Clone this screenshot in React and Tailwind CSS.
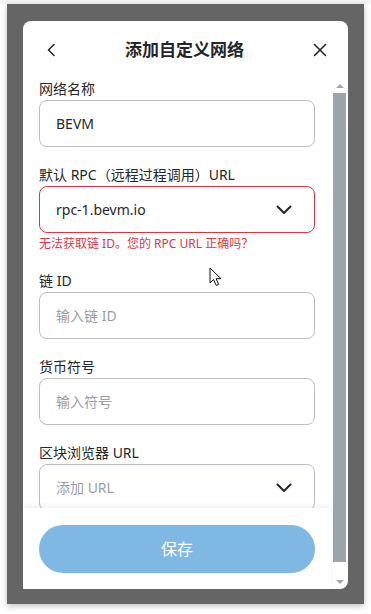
import { useState } from 'react';

const font = { fontFamily: '"Noto Sans", "Noto Sans CJK SC", sans-serif' };

function Chevron() {
  return (
    <svg width="16" height="10" viewBox="0 0 16 10" fill="none" stroke="#24272a" strokeWidth="2" strokeLinecap="round" strokeLinejoin="round">
      <path d="M1.5 1.5l6.5 6.5 6.5-6.5" />
    </svg>
  );
}

function Field({ label, value, placeholder, error, dropdown }) {
  return (
    <div className="flex flex-col">
      <div className="h-[20px] leading-[20px] text-[14px] text-[#24272a]">{label}</div>
      <div
        className={`mt-[1px] h-[47px] shrink-0 rounded-lg border flex items-center pl-[16px] pr-[22px] ${
          error ? 'border-[#d73847]' : 'border-[#bbc0c5]'
        }`}
      >
        <span className={`flex-1 text-[14px] ${value ? 'text-[#24272a]' : 'text-[#9a9fa5]'}`}>
          {value || placeholder}
        </span>
        {dropdown && <Chevron />}
      </div>
      {error && (
        <div className="mt-[2px] h-[18px] leading-[18px] text-[12px] text-[#d73847]">{error}</div>
      )}
    </div>
  );
}

export default function App() {
  const [fields] = useState([
    { label: '网络名称', value: 'BEVM' },
    {
      label: '默认 RPC（远程过程调用）URL',
      value: 'rpc-1.bevm.io',
      dropdown: true,
      error: '无法获取链 ID。您的 RPC URL 正确吗？',
    },
    { label: '链 ID', placeholder: '输入链 ID' },
    { label: '货币符号', placeholder: '输入符号' },
    { label: '区块浏览器 URL', placeholder: '添加 URL', dropdown: true },
  ]);

  return (
    <div className="relative w-[371px] h-[614px] bg-white overflow-hidden" style={font}>
      <div className="h-[4px] bg-[#f3f4f6]" />
      <div className="ml-[7px] w-[357px] h-[600px] bg-[#656565] shadow-[0_2px_6px_rgba(0,0,0,0.25)] pt-[17px] pl-[16px]">
        {/* modal */}
        <div className="w-[325px] h-[568px] bg-white rounded-t-lg rounded-br-lg flex flex-col overflow-hidden">
          <div className="h-[57px] shrink-0 flex items-center justify-between pl-[23px] pr-[21px]">
            <svg width="10" height="14" viewBox="0 0 10 14" fill="none" stroke="#24272a" strokeWidth="1.6" strokeLinecap="round" strokeLinejoin="round">
              <path d="M8 1.5L2.5 7 8 12.5" />
            </svg>
            <h2 className="text-[17px] font-bold text-[#24272a]">添加自定义网络</h2>
            <svg width="14" height="14" viewBox="0 0 14 14" fill="none" stroke="#24272a" strokeWidth="1.6" strokeLinecap="round">
              <path d="M1.5 1.5l11 11M12.5 1.5l-11 11" />
            </svg>
          </div>

          <div className="flex-1 min-h-0 flex">
            <div className="flex-1 min-w-0 flex flex-col">
              <div className="flex-1 min-h-0 overflow-hidden px-[16px] pt-[1px] flex flex-col gap-[18px]">
                {fields.map((f) => (
                  <Field key={f.label} {...f} />
                ))}
              </div>
              <div className="h-[81px] shrink-0 bg-white px-[16px] pt-[17px] shadow-[0_-3px_6px_rgba(0,0,0,0.05)] relative">
                <button className="w-full h-[48px] rounded-full bg-[#80b8e4] text-white text-[16px]">保存</button>
              </div>
            </div>

            {/* scrollbar */}
            <div className="w-[17px] shrink-0 flex flex-col pl-[2px] pr-[2px]">
              <div className="h-[15px] flex items-center justify-center">
                <div className="w-0 h-0 border-l-[4px] border-r-[4px] border-b-[4px] border-l-transparent border-r-transparent border-b-[#a3a7ab]" />
              </div>
              <div className="flex-1 flex flex-col">
                <div className="h-[469px] bg-[#9ea4ab]" />
              </div>
              <div className="h-[15px] flex items-center justify-center">
                <div className="w-0 h-0 border-l-[4px] border-r-[4px] border-t-[4px] border-l-transparent border-r-transparent border-t-[#a3a7ab]" />
              </div>
            </div>
          </div>
        </div>
      </div>

      {/* mouse pointer */}
      <svg className="absolute left-[209px] top-[267px]" width="14" height="20" viewBox="0 0 14 20">
        <path d="M1 1v15l3.6-3.4 2.6 5.8 2.4-1-2.5-5.7H12z" fill="white" stroke="#111" strokeWidth="1" strokeLinejoin="round" />
      </svg>
    </div>
  );
}
